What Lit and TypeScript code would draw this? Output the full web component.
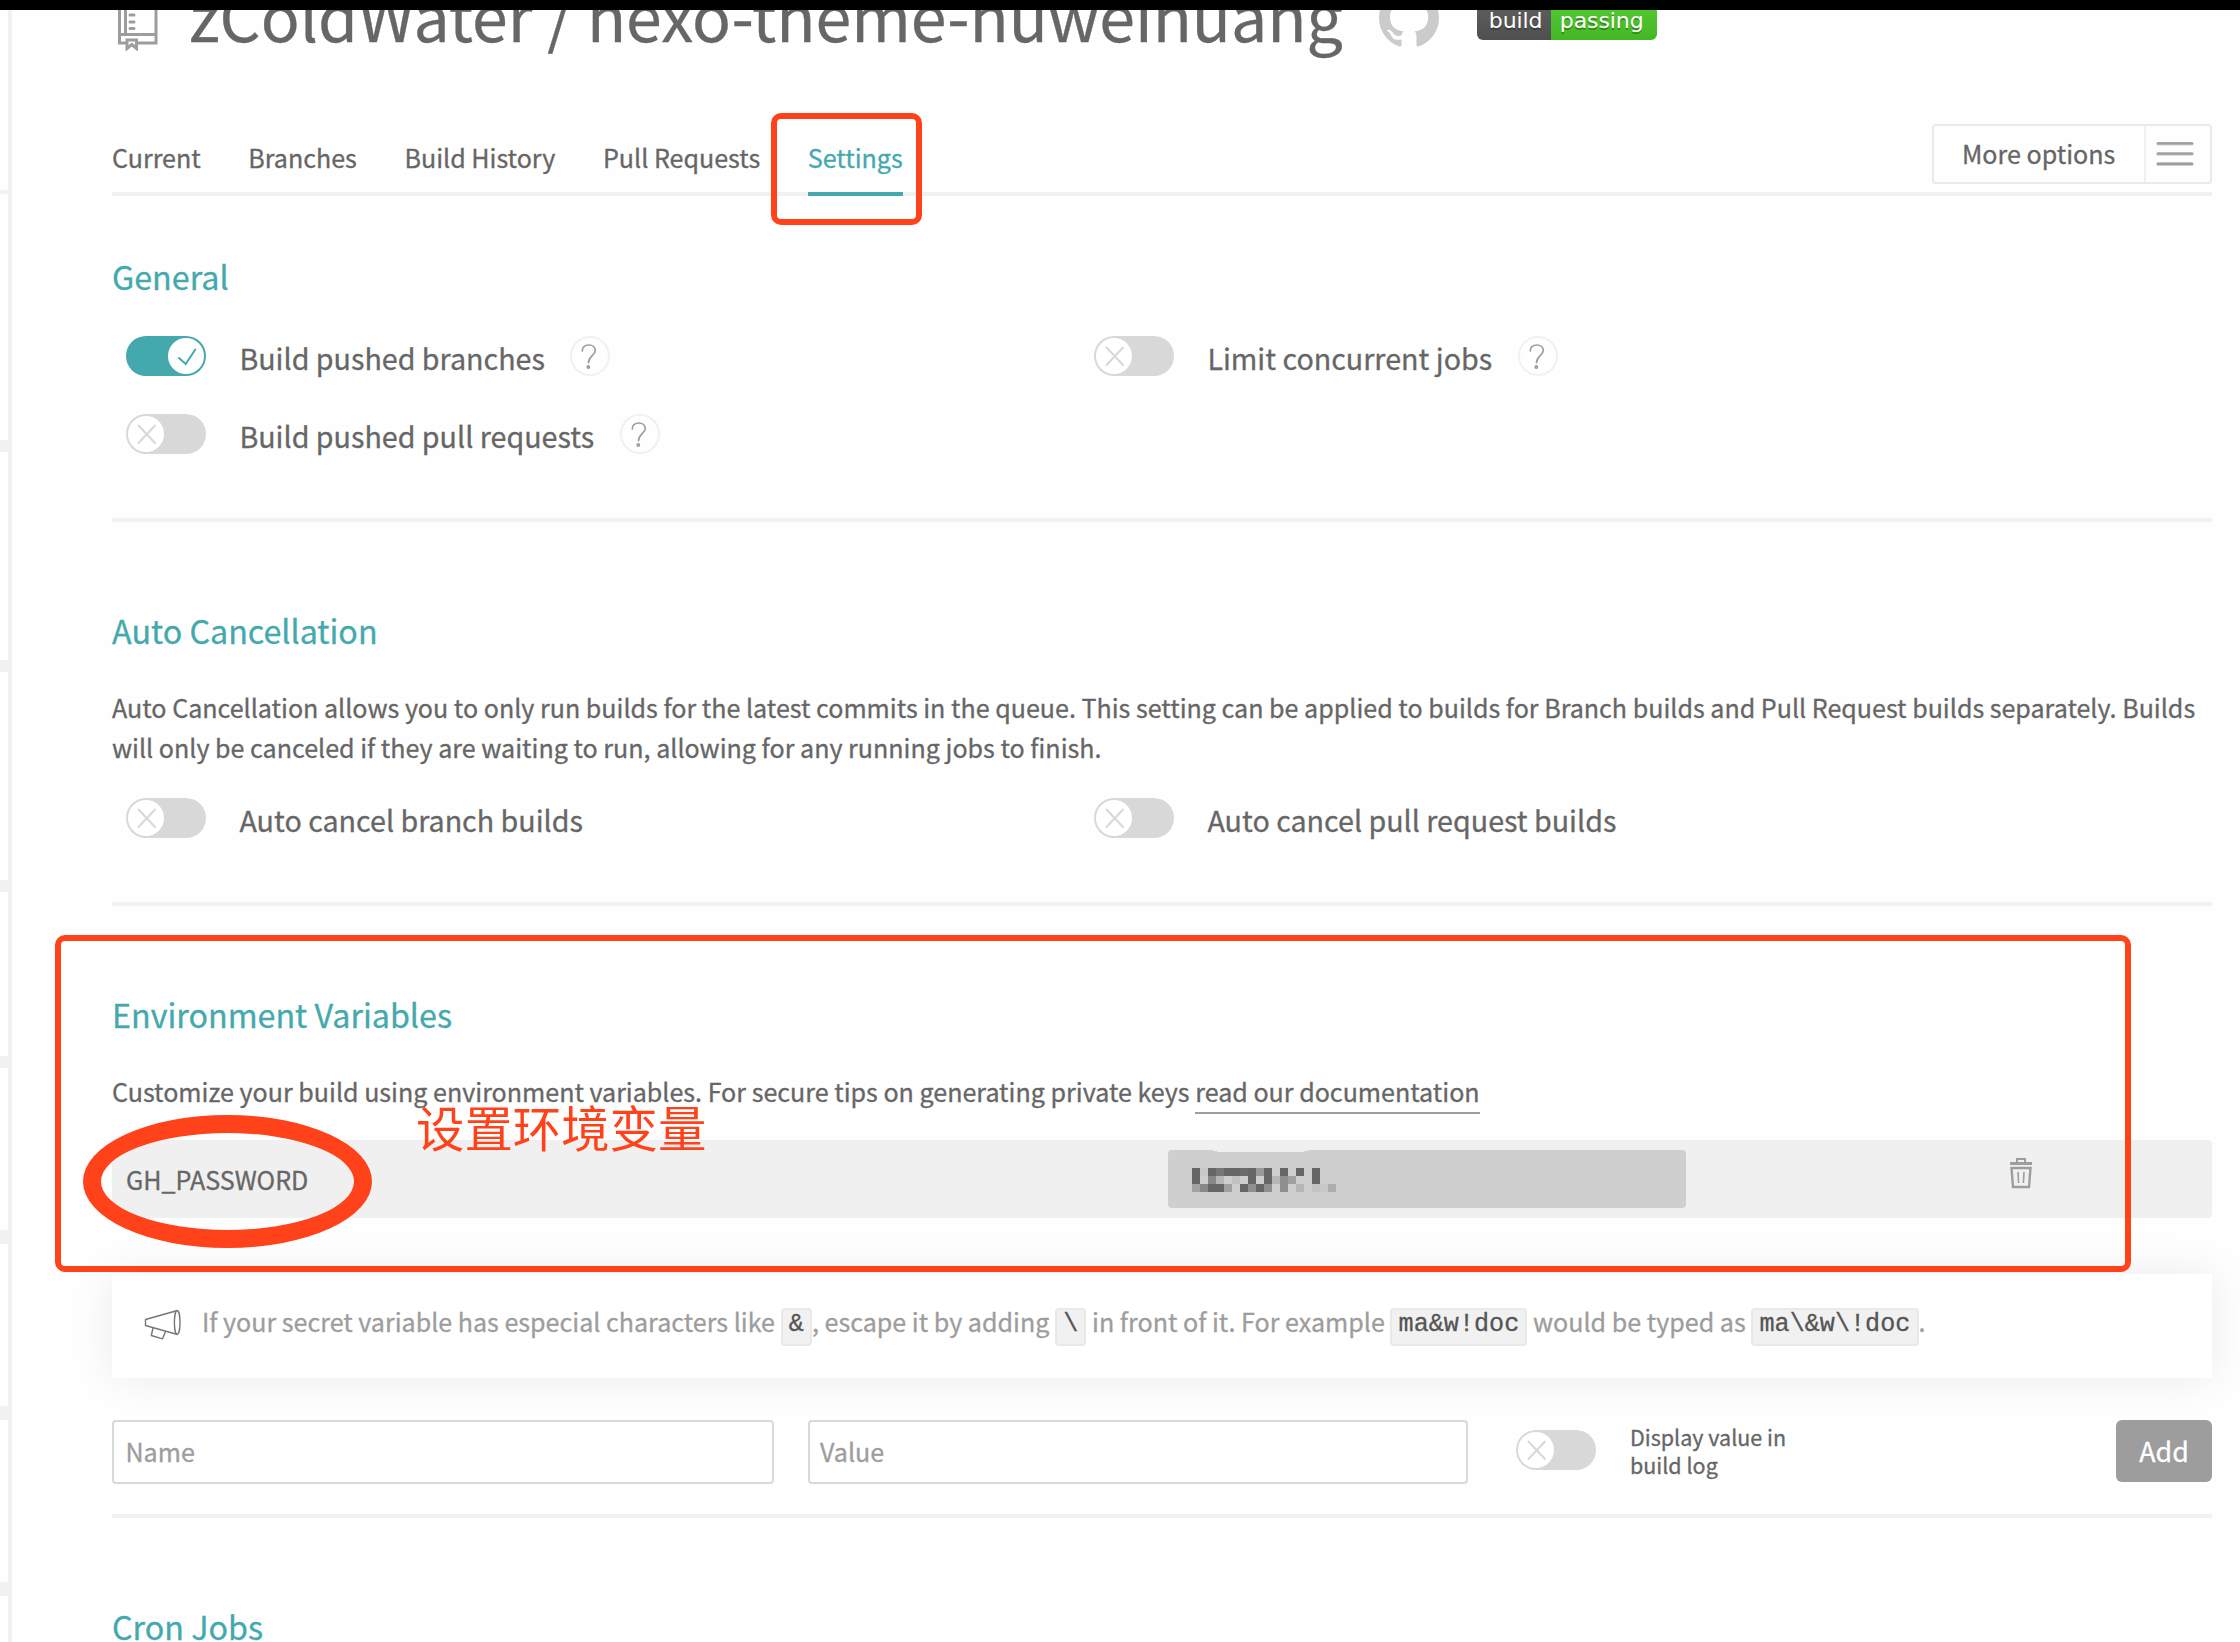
import { LitElement, html, css, svg } from "lit";
import { customElement, property } from "lit/decorators.js";
import { classMap } from "lit/directives/class-map.js";

@customElement("toggle-switch")
class ToggleSwitch extends LitElement {
  @property({ type: Boolean }) on = false;
  static styles = css`
    :host { display: block; flex: none; width: 80px; height: 40px; }
    .track { box-sizing: border-box; display: flex; width: 80px; height: 40px; padding: 2px; border-radius: 20px; background: #d8d8d8; }
    .track.on { background: #44a9ad; justify-content: flex-end; }
    .knob { width: 36px; height: 36px; border-radius: 50%; background: #fff; }
    .icon { display: block; width: 36px; height: 36px; fill: none; stroke: #d8d8d8; stroke-width: 2; stroke-linecap: round; }
    .on .icon { stroke: #44a9ad; }
  `;
  render() {
    return html`<div class=${classMap({ track: true, on: this.on })}>
      <div class="knob">
        <svg class="icon" viewBox="0 0 36 36">
          ${this.on
            ? svg`<path d="M11 20 L17.7 26 L27.3 11.5" />`
            : svg`<path d="M10.5 9.5 L27 27 M27 9.5 L10.5 27" />`}
        </svg>
      </div>
    </div>`;
  }
}

@customElement("help-badge")
class HelpBadge extends LitElement {
  static styles = css`
    :host { display: block; flex: none; }
    .icon { display: block; width: 40px; height: 40px; fill: none; }
    .ring { stroke: #f1f1f1; stroke-width: 2; }
    .mark { stroke: #9d9d9d; stroke-width: 1.7; stroke-linecap: round; }
  `;
  render() {
    return html`<svg class="icon" viewBox="0 0 40 40">
      <circle class="ring" cx="20" cy="20" r="19" />
      <path class="mark" d="M12.3 15 C12 11.5 15 9 18.8 9 C22.8 9 25.3 11.4 25.3 14.6 C25.3 19.2 18.8 20 18.5 26.6" />
      <circle class="mark" cx="18.3" cy="31" r="1.1" />
    </svg>`;
  }
}

const TABS = ["Current", "Branches", "Build History", "Pull Requests", "Settings"];

/* Grey level per 8px cell of the masked value; "" leaves the field colour. */
const MASK = [
  ["66", "c8", "66", "77", "66", "66", "6b", "66", "99", "66", "", "66", "", "66", "", "66", "", ""],
  ["66", "", "88", "b5", "", "c0", "", "66", "", "66", "b5", "8f", "9f", "", "", "66", "", ""],
  ["a3", "88", "66", "66", "a0", "", "66", "8f", "66", "8f", "", "8f", "", "b5", "", "c4", "c7", "ad"],
];

@customElement("app-root")
class AppRoot extends LitElement {
  static styles = css`
    :host { display: block; }
    .page {
      position: relative; width: 2240px; height: 1642px; overflow: hidden; background: #fefefe; color: #666;
      font-family: "Noto Sans CJK SC", "Noto Sans", sans-serif; font-size: 25.07px; line-height: 40px;
      -webkit-text-stroke: 0.3px currentColor;
      display: flex; flex-direction: column;
    }
    .topbar { flex: none; height: 10px; background: #000; }
    .body { flex: 1; min-height: 0; overflow: hidden; display: flex; }
    .side { flex: none; width: 8px; border-right: 4px solid #f1f1f1; display: flex; flex-direction: column; }
    .bar { flex: none; box-sizing: border-box; border-bottom: 12px solid #f1f1f1; height: 176px; }
    .bar.b1 { height: 184px; border-bottom-width: 4px; }
    .bar.b2 { height: 258px; }
    .bar.b3 { height: 220px; }
    .bar.thick { border-bottom-width: 14px; }
    .main { width: 2100px; margin-left: 100px; display: flex; flex-direction: column; }

    .header { flex: none; height: 60px; margin: -23px 0 77px; display: flex; white-space: nowrap; }
    .repo { flex: none; width: 45px; height: 64px; margin-left: 4px; margin-right: 28px; fill: none; stroke: #9d9d9d; stroke-width: 3; }
    .title { margin: -3px 0 0; font-size: 64.45px; line-height: 60px; font-weight: 400; }
    .octo { flex: none; width: 60px; height: 60px; margin: 1px 38px 0 36px; fill: #cbcbcb; }
    .badge { flex: none; display: flex; width: 180px; height: 40px; margin-top: 13px; border-radius: 6px; overflow: hidden; color: #fff;
      font: 22px/41px "DejaVu Sans", sans-serif; text-shadow: 0 2px 0 rgba(1, 1, 1, 0.3); letter-spacing: -0.1px; -webkit-text-stroke: 0; }
    .badge .left { width: 74px; padding-left: 12px; box-sizing: border-box; background: linear-gradient(#606060, #4f4f4f); }
    .badge .right { flex: 1; padding-left: 9px; background: linear-gradient(#55cc33, #44b625); }

    .nav { flex: none; height: 72px; display: flex; justify-content: space-between; box-shadow: inset 0 -4px #f1f1f1; }
    .tabs { display: flex; gap: 47.6px; }
    .tab { padding: 13px 0 15px; white-space: nowrap; }
    .tab.active { color: #44a9ad; border-bottom: 4px solid #44a9ad; }
    .more { box-sizing: border-box; width: 280px; height: 60px; border: 2px solid #eaeaea; border-radius: 4px; display: flex; background: #fefefe; }
    .more-label { flex: none; width: 212px; padding-left: 28px; box-sizing: border-box; line-height: 54px; border-right: 2px solid #f1f1f1; white-space: nowrap; }
    .lines { flex: none; width: 38px; height: 56px; margin-left: 10px; }

    .heading { margin: 56px 0 0; font-size: 32.25px; line-height: 48px; font-weight: 400; color: #44a9ad; flex: none; white-space: nowrap; }
    .rule { flex: none; height: 4px; background: #f1f1f1; margin-top: 64px; }
    .rule + .heading { margin-top: 84px; }
    .options { display: grid; grid-template-columns: 968px 1fr; row-gap: 38px; margin-top: 36px; padding-left: 14px; }
    .options.after-text { margin-top: 31px; }
    .option { display: flex; height: 40px; white-space: nowrap; }
    .option .label { font-size: 28.66px; line-height: 43px; margin-left: 33.4px; margin-right: 25.6px; }
    .desc { margin: 33px 0 0; flex: none; }
    .desc.single { height: 40px; }
    .link { display: inline-block; height: 41px; border-bottom: 2px solid #9d9d9d; vertical-align: top; }

    .env { flex: none; height: 78px; margin-top: 29px; background: #f0f0f0; border-radius: 4px; display: flex; align-items: center; }
    .env-name { width: 1042px; padding-left: 14px; line-height: 78px; }
    .env-value { flex: none; box-sizing: border-box; width: 518px; height: 58px; border-radius: 4px; background: #cfcfcf; }
    .mask { display: block; width: 300px; height: 58px; }
    .trash { width: 24px; height: 32px; margin: -12px 0 0 323px; fill: none; stroke: #9d9d9d; stroke-width: 2; }

    .notice { flex: none; height: 104px; margin-top: 56px; background: #fff; box-shadow: 0 0 44px rgba(0, 0, 0, 0.08); color: #9d9d9d; display: flex; white-space: nowrap; }
    .horn { flex: none; width: 38px; height: 32px; margin: 35px 20px 0 32px; fill: none; stroke: #777; stroke-width: 1.4; stroke-linejoin: round; }
    .notice-text { margin-top: 27px; }
    .code { display: inline-block; box-sizing: border-box; height: 38px; padding: 0 6.2px; border: 2px solid #e9e9e9; border-radius: 4px; background: #f1f1f1;
      color: #555; font: 25.15px/29px "Liberation Mono", monospace; vertical-align: top; margin-top: 7px; }

    .form { flex: none; height: 64px; margin-top: 42px; display: flex; }
    .input { box-sizing: border-box; height: 64px; border: 2px solid #d9d9d9; border-radius: 4px; background: #fff; color: #9d9d9d; padding-left: 11.5px; line-height: 59px; }
    .input.name { width: 662px; margin-right: 34px; }
    .input.value { width: 660px; margin-right: 48px; padding-left: 10px; }
    .form-switch { margin-top: 10px; }
    .log-label { width: 200px; margin: 3px auto 0 34px; font-size: 21.5px; line-height: 28px; }
    .add { width: 96px; height: 62px; border-radius: 6px; background: #9d9d9d; color: #fff; text-align: center; font-size: 26.8px; line-height: 61px; }
    .form + .rule { margin-top: 30px; }

    .mark { position: absolute; box-sizing: border-box; border: 6px solid #ff421a; border-radius: 10px; }
    .mark-tab { left: 771px; top: 113px; width: 151px; height: 112px; }
    .mark-env { left: 55px; top: 935px; width: 2076px; height: 337px; }
    .mark-name { left: 83px; top: 1115px; width: 289px; height: 133px; border-width: 18px; border-radius: 50%; }
    .note { position: absolute; left: 416px; top: 1097px; font-size: 48.4px; line-height: 58px; color: #ff421a; white-space: nowrap; -webkit-text-stroke: 0; }
  `;

  option(label: string, on = false, help = false) {
    return html`<div class="option">
      <toggle-switch ?on=${on}></toggle-switch>
      <span class="label">${label}</span>
      ${help ? html`<help-badge></help-badge>` : ""}
    </div>`;
  }

  render() {
    return html`<div class="page">
      <div class="topbar"></div>
      <div class="body">
        <div class="side">
          <div class="bar b1"></div>
          <div class="bar b2"></div>
          <div class="bar b3"></div>
          <div class="bar b3"></div>
          <div class="bar"></div>
          <div class="bar thick"></div>
          <div class="bar thick"></div>
          <div class="bar thick"></div>
        </div>
        <div class="main">
          <header class="header">
            <svg class="repo" viewBox="0 0 45 64">
              <path d="M3.5 0 V56 H10 M21 56 H40 V0 M3.5 47.5 H40 M9.5 0 V47" />
              <path d="M14 21.5 h4 M14 28 h4 M14 35 h4 M14 41.5 h4" stroke-linecap="round" />
              <path d="M11 61.5 V53 H20.5 V61.5 L15.8 57.5 Z" />
            </svg>
            <h1 class="title">zColdWater / hexo-theme-huweihuang</h1>
            <svg class="octo" viewBox="0 0 16 16">
              <path d="M8 0C3.58 0 0 3.58 0 8c0 3.54 2.29 6.53 5.47 7.59.4.07.55-.17.55-.38 0-.19-.01-.82-.01-1.49-2.01.37-2.53-.49-2.69-.94-.09-.23-.48-.94-.82-1.13-.28-.15-.68-.52-.01-.53.63-.01 1.08.58 1.23.82.72 1.21 1.87.87 2.33.66.07-.52.28-.87.51-1.07-1.78-.2-3.64-.89-3.64-3.95 0-.87.31-1.59.82-2.15-.08-.2-.36-1.02.08-2.12 0 0 .67-.21 2.2.82.64-.18 1.32-.27 2-.27s1.36.09 2 .27c1.53-1.04 2.2-.82 2.2-.82.44 1.1.16 1.92.08 2.12.51.56.82 1.27.82 2.15 0 3.07-1.87 3.75-3.65 3.95.29.25.54.73.54 1.48 0 1.07-.01 1.93-.01 2.2 0 .21.15.46.55.38A8.01 8.01 0 0 0 16 8c0-4.42-3.58-8-8-8z" />
            </svg>
            <div class="badge"><span class="left">build</span><span class="right">passing</span></div>
          </header>

          <nav class="nav">
            <div class="tabs">
              ${TABS.map((t) => html`<span class=${classMap({ tab: true, active: t === "Settings" })}>${t}</span>`)}
            </div>
            <div class="more">
              <span class="more-label">More options</span>
              <svg class="lines" viewBox="0 0 38 56">
                <g stroke-width="3.6" stroke-linecap="round" stroke="#cfcfcf"><path d="M2 17.8H36M2 28H36M2 38.2H36" /></g>
                <g stroke-width="2.4" stroke-linecap="round" stroke="#9d9d9d"><path d="M2 17.4H36M2 27.6H36M2 37.8H36" /></g>
              </svg>
            </div>
          </nav>

          <h2 class="heading">General</h2>
          <div class="options">
            ${this.option("Build pushed branches", true, true)}
            ${this.option("Limit concurrent jobs", false, true)}
            ${this.option("Build pushed pull requests", false, true)}
          </div>
          <div class="rule"></div>

          <h2 class="heading">Auto Cancellation</h2>
          <p class="desc">Auto Cancellation allows you to only run builds for the latest commits in the queue. This setting can be applied to builds for Branch builds and Pull Request builds separately. Builds will only be canceled if they are waiting to run, allowing for any running jobs to finish.</p>
          <div class="options after-text">
            ${this.option("Auto cancel branch builds")}
            ${this.option("Auto cancel pull request builds")}
          </div>
          <div class="rule"></div>

          <h2 class="heading">Environment Variables</h2>
          <p class="desc single">Customize your build using environment variables. For secure tips on generating private keys <span class="link">read our documentation</span></p>
          <div class="env">
            <span class="env-name">GH_PASSWORD</span>
            <div class="env-value">
              <svg class="mask" viewBox="0 0 300 58" shape-rendering="crispEdges">
                <path d="M43 0H142L134 2H51Z" fill="#f0f0f0" />
                ${MASK.map((row, y) => row.map((c, x) => c
                  ? svg`<rect x=${24 + x * 8} y=${18 + y * 8} width="8" height="8" fill=${"#" + c + c + c} />` : ""))}
              </svg>
            </div>
            <svg class="trash" viewBox="0 0 24 32">
              <path d="M1 6.5H23" stroke-width="3" />
              <path d="M8 6V2H16V6" />
              <path d="M2.5 11H21.5L20 30H4Z" stroke-width="2.4" />
              <path d="M9 15L9.6 26M15 15L14.4 26" stroke-width="1.6" />
            </svg>
          </div>

          <div class="notice">
            <svg class="horn" viewBox="0 0 38 32">
              <path d="M33.5 1.5L1.5 10.5V16.5L33.5 25.5" />
              <ellipse cx="33.2" cy="13.5" rx="2.8" ry="12" />
              <path d="M9 19L7.3 26.5L18.5 29.8L21.5 22.5" />
            </svg>
            <div class="notice-text">If your secret variable has especial characters like <span class="code">&amp;</span>, escape it by adding <span class="code">\\</span> in front of it. For example <span class="code">ma&amp;w!doc</span> would be typed as <span class="code">ma\\&amp;w\\!doc</span>.</div>
          </div>

          <div class="form">
            <div class="input name">Name</div>
            <div class="input value">Value</div>
            <toggle-switch class="form-switch"></toggle-switch>
            <div class="log-label">Display value in<br />build log</div>
            <div class="add">Add</div>
          </div>
          <div class="rule"></div>

          <h2 class="heading">Cron Jobs</h2>
        </div>
      </div>
      <div class="mark mark-tab"></div>
      <div class="mark mark-env"></div>
      <div class="mark mark-name"></div>
      <div class="note">设置环境变量</div>
    </div>`;
  }
}
